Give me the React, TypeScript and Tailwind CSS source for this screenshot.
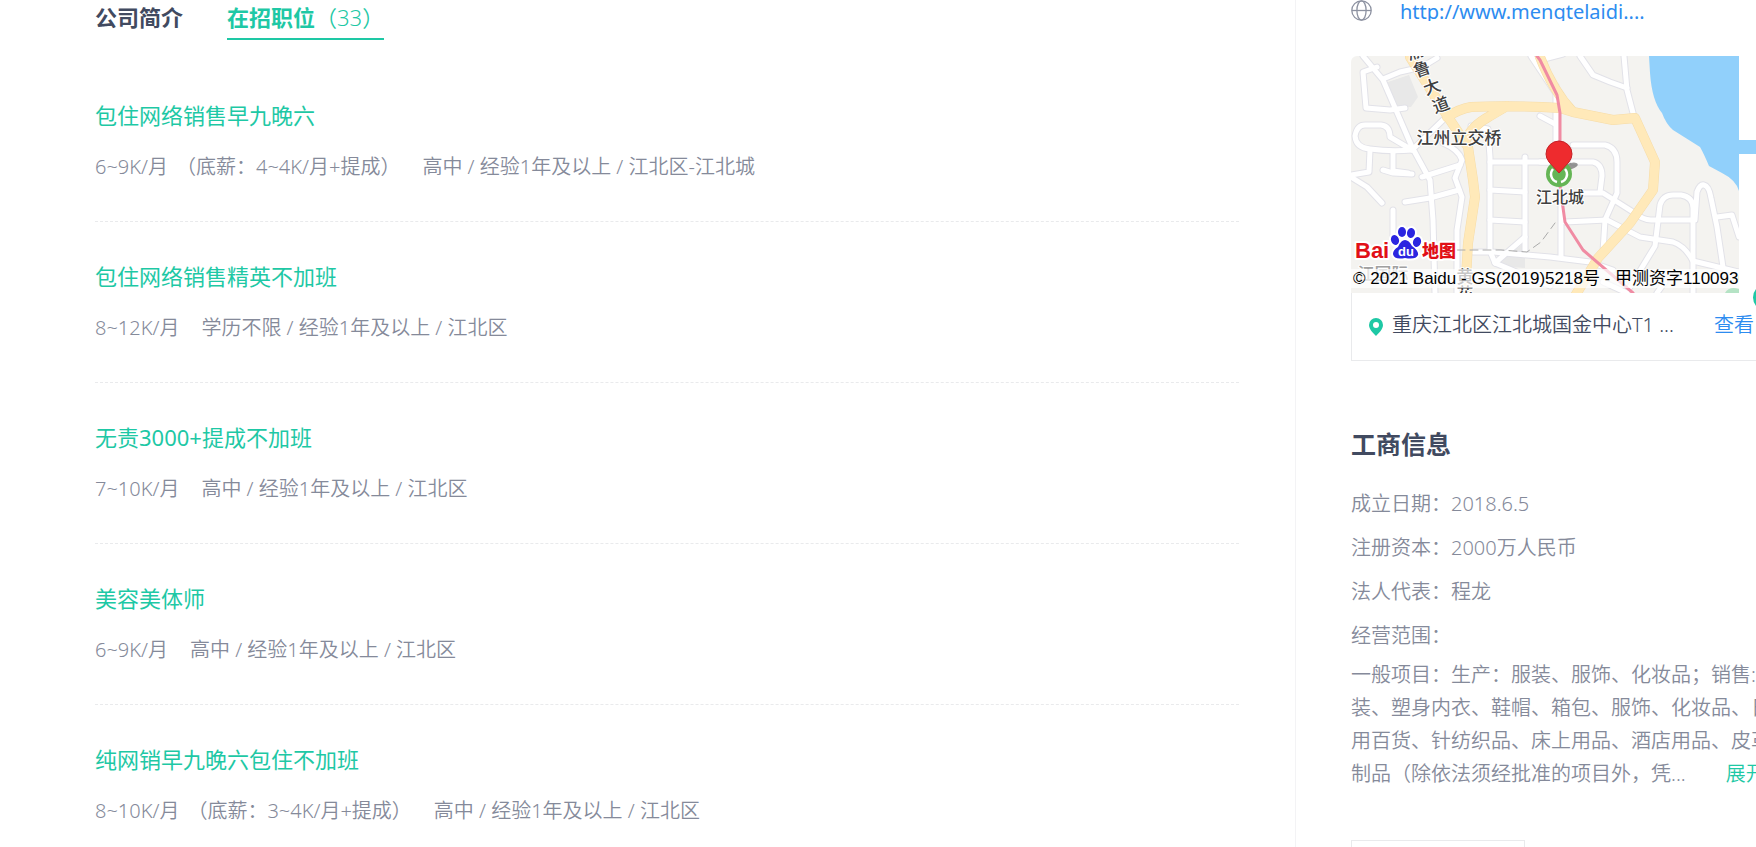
import React from "react";

type Job = { title: string; pay: string; base?: string; detail: string };

const jobs: Job[] = [
  { title: "包住网络销售早九晚六", pay: "6~9K/月", base: "（底薪：4~4K/月+提成）", detail: "高中 / 经验1年及以上 / 江北区-江北城" },
  { title: "包住网络销售精英不加班", pay: "8~12K/月", detail: "学历不限 / 经验1年及以上 / 江北区" },
  { title: "无责3000+提成不加班", pay: "7~10K/月", detail: "高中 / 经验1年及以上 / 江北区" },
  { title: "美容美体师", pay: "6~9K/月", detail: "高中 / 经验1年及以上 / 江北区" },
  { title: "纯网销早九晚六包住不加班", pay: "8~10K/月", base: "（底薪：3~4K/月+提成）", detail: "高中 / 经验1年及以上 / 江北区" },
];

const facts = [
  ["成立日期：", "2018.6.5"],
  ["注册资本：", "2000万人民币"],
  ["法人代表：", "程龙"],
  ["经营范围：", ""],
];

const streets = [
  "M12 0L32 24L61 91L79 124L82 164L84 237",
  "M86 2Q72 12 49 16L32 23",
  "M26 11L12 16L15 52L39 54L54 52",
  "M4 80Q6 69 14 69H30Q39 70 39 81L61 94Q40 96 19 93Q5 92 4 80Z",
  "M19 94L18 116L0 119",
  "M42 96L42 115L57 117",
  "M0 121L16 131L31 147",
  "M32 114L42 117L61 118",
  "M54 146L79 142L108 134",
  "M42 154V181",
  "M61 94L92 64",
  "M92 87Q108 94 111 104L104 122L111 141L106 174V237",
  "M71 121L109 109",
  "M120 70L137 73L139 101V195L144 207L199 230",
  "M139 106H199",
  "M139 134L174 136",
  "M139 164L174 166",
  "M174 101V194",
  "M122 196H142L199 201L239 206L262 214",
  "M144 207L174 181",
  "M229 0L242 19L259 26L276 32",
  "M273 0L276 34L282 57",
  "M205 30V86",
  "M189 60L204 68",
  "M180 0L204 36",
  "M189 4L212 -2",
  "M222 89H254Q266 92 266 106V137L254 164L252 196",
  "M222 106H242Q251 108 251 120L249 136",
  "M189 106H204",
  "M232 137H252L282 156Q292 164 300 164H342",
  "M214 166L256 164L289 181L322 186Q334 190 342 205L388 216",
  "M279 231L304 190L309 149Q312 139 322 139H330Q342 141 342 152V237",
  "M344 164L346 136Q349 128 353 129Q358 130 360 142L366 171L372 211",
  "M366 161L381 159L388 181",
  "M210 150V201",
  "M306 237L314 226",
  "M252 226L276 237",
];

const YELLOW =
  "M59 1L97 61L117 91L122 124L124 141L117 187L114 240M96 61Q108 53 120 51Q160 49 209 52L222 56L262 64L284 62L304 106L302 134L279 167L247 202L224 240M114 86Q120 70 139 60L156 50M189 1Q202 35 222 56";

function Paw() {
  return (
    <g fill="#2b25e0">
      <ellipse cx="44" cy="184" rx="4" ry="5" transform="rotate(-20 44 184)" />
      <ellipse cx="51" cy="176" rx="4" ry="5" />
      <ellipse cx="60" cy="177" rx="4" ry="5" transform="rotate(10 60 177)" />
      <ellipse cx="66" cy="186" rx="4" ry="5" transform="rotate(20 66 186)" />
      <path d="M54 184Q58 184 61 190Q68 195 67 199Q65 204 54 202Q43 204 42 198Q42 194 47 191Q50 184 54 184Z" />
    </g>
  );
}

function MapDrawing() {
  return (
    <svg viewBox="0 0 388 237" className="block h-full w-full" aria-label="地图">
      <rect width="388" height="237" fill="#f4f3f0" />
      <path d="M34 27L58 19L67 41L60 51H44Z" fill="#e8e8e8" />
      <path d="M144 210L174 186V212Z" fill="#e8e8e8" />
      <path d="M374 237Q378 230 388 233V237Z" fill="#b5e3c5" />
      <path d="M298 0L299 17Q301 45 311 57Q315 68 322 74L349 91Q353 98 358 110L371 117Q385 124 388 135V0Z" fill="#91d0fb" />
      <g fill="none" strokeLinejoin="round" strokeLinecap="round">
        {streets.map((d) => <path key={d} d={d} stroke="#e2e2e8" strokeWidth="7" />)}
        {streets.map((d) => <path key={d} d={d} stroke="#ffffff" strokeWidth="5" />)}
        <path d={YELLOW} stroke="#f6dca8" strokeWidth="10" />
        <path d={YELLOW} stroke="#ffe9b9" strokeWidth="9" />
        <path d="M106 194L150 194L176 196L190 186L204 167" stroke="#aaaaaa" strokeWidth="1" strokeDasharray="8 5" />
        <path d="M186 0L189 4L206 39L209 57V130L214 166L232 194L282 237" stroke="#f08ba3" strokeWidth="3" />
      </g>
      <ellipse cx="220" cy="110" rx="7" ry="3" fill="#555555" opacity="0.6" transform="rotate(-15 220 110)" />
      <circle cx="208" cy="118" r="13" fill="#65b555" />
      <path d="M202 113A8 8 0 0 0 206 126M214 113A8 8 0 0 1 210 126" fill="none" stroke="#ffffff" strokeWidth="2.5" />
      <path d="M208 117L198 106Q195 102 195 98A13 13 0 0 1 221 98Q221 102 218 106Z" fill="#ee2b2e" stroke="#c42026" strokeWidth="1" />
      <g
        fill="#404040"
        stroke="#ffffff"
        strokeWidth="2"
        paintOrder="stroke"
        textAnchor="middle"
        fontSize="17"
        fontWeight="500"
        className="font-['Noto_Sans_CJK_SC',sans-serif]"
      >
        <text x="108" y="88">江州立交桥</text>
        <text x="209" y="147" fontSize="16">江北城</text>
        <text transform="translate(64 -4) rotate(-20)" y="6">渝</text>
        <text transform="translate(71 13) rotate(-20)" y="6">鲁</text>
        <text transform="translate(81 31) rotate(-20)" y="6">大</text>
        <text transform="translate(90 49) rotate(-20)" y="6">道</text>
        <text x="32" y="224" fill="#a0a0a0">江国际</text>
        <text x="114" y="227">黄</text>
        <text x="114" y="244">花</text>
      </g>
      <g stroke="#ffffff" strokeWidth="4" paintOrder="stroke" strokeLinejoin="round" fontWeight="900">
        <text x="4" y="202" fontSize="22" fill="#e10f17" className="font-['Liberation_Sans',sans-serif]">Bai</text>
        <text x="71" y="201" fontSize="17" fill="#e10f17" className="font-['Noto_Sans_CJK_SC',sans-serif]">地图</text>
      </g>
      <g stroke="#ffffff" strokeWidth="4" strokeLinejoin="round"><Paw /></g>
      <Paw />
      <text x="47" y="200" fontSize="13" fontWeight="700" fill="#ffffff" className="font-['Liberation_Sans',sans-serif]">du</text>
    </svg>
  );
}

function Globe() {
  return (
    <svg viewBox="0 0 21 21" className="size-[21px] shrink-0" fill="none" stroke="#8d92a1" strokeWidth="1.3">
      <circle cx="10.5" cy="10.5" r="9.7" />
      <ellipse cx="10.5" cy="10.5" rx="4.6" ry="9.7" />
      <path d="M1 10.5H20" />
    </svg>
  );
}

export default function App() {
  return (
    <div className="flex overflow-hidden bg-white font-['Noto_Sans','Noto_Sans_CJK_SC',sans-serif] text-[#858a9a]">
      <main className="min-w-0 flex-1 pr-14 pl-[95px]">
        <nav className="flex gap-11 text-[22px] leading-8">
          <a href="#intro" className="pt-px font-bold text-[#414a60]">公司简介</a>
          <a href="#jobs" className="border-b-2 border-[#1ec8a5] pt-px pb-[5px] text-[#1ec8a5]" aria-current="page">
            <b>在招职位</b>
            <span className="font-[350]">（33）</span>
          </a>
        </nav>
        <ul className="pt-[21px]">
          {jobs.map((job) => (
            <li key={job.title} className="h-[161px] border-b border-dashed border-[#e9eaec] pt-[38px]">
              <h3 className="text-[22px] leading-8">
                <a href="#job" className="text-[#1ec8a5]">{job.title}</a>
              </h3>
              <p className="mt-[18px] flex text-[20px] leading-9 font-[350] whitespace-nowrap">
                <span>{job.pay}</span>
                {job.base && <span className="ml-2">{job.base}</span>}
                <span className="ml-[22px]">{job.detail}</span>
              </p>
            </li>
          ))}
        </ul>
      </main>

      <aside className="h-[847px] w-[461px] shrink-0 overflow-hidden border-l border-[#f3f3f5] pl-[55px]">
        <div className="w-[430px]">
          <div className="flex h-[21px] overflow-hidden text-[20px]">
            <Globe />
            <a href="http://www.mengtelaidi.com" className="ml-7 leading-[23px] text-[#2d8cf0]">http://www.mengtelaidi....</a>
          </div>

          <section className="relative mt-[35px]">
            <div className="relative h-[237px] bg-[linear-gradient(#91d0fb,#91d0fb)] bg-[length:100%_14px] bg-[position:0_84px] bg-no-repeat">
              <div className="relative h-full w-[388px] overflow-hidden rounded-tl-md">
                <MapDrawing />
                <p className="absolute inset-x-0 bottom-[5px] h-[19px] overflow-hidden bg-white/70 pl-0.5 font-['Liberation_Sans','Noto_Sans_CJK_SC',sans-serif] text-[17px] leading-[19px] whitespace-nowrap text-black">
                  © 2021 Baidu - GS(2019)5218号 - 甲测资字1100930
                </p>
              </div>
            </div>
            <span className="absolute top-[228px] left-[402px] size-[27px] rounded-full bg-[#1ec8a5]" />
            <div className="flex h-[68px] items-center border border-t-0 border-[#e9eaec] pb-1 pl-[17px] text-[20px] font-[350]">
              <svg viewBox="0 0 14 18" className="mt-1 h-[18px] w-[14px]">
                <path fillRule="evenodd" fill="#1ec8a5" d="M7 0A7 7 0 0 1 14 7C14 11 10 15 7 18C4 15 0 11 0 7A7 7 0 0 1 7 0ZM7 4A3 3 0 1 0 7 10A3 3 0 1 0 7 4Z" />
              </svg>
              <span className="ml-[9px] w-[322px] whitespace-nowrap text-[#414a60]">重庆江北区江北城国金中心T1 ...</span>
              <a href="#map" className="whitespace-nowrap text-[#2d8cf0]">查看</a>
            </div>
          </section>

          <section className="pt-[65px] font-[350]">
            <h2 className="text-[25px] leading-9 font-bold text-[#414a60]">工商信息</h2>
            <dl className="mt-5 text-[20px] leading-[44px]">
              {facts.map(([k, v]) => (
                <div key={k} className="flex">
                  <dt>{k}</dt>
                  <dd>{v}</dd>
                </div>
              ))}
            </dl>
            <p className="text-[20px] leading-[33px]">
              一般项目：生产：服装、服饰、化妆品；销售:服装、塑身内衣、鞋帽、箱包、服饰、化妆品、日用百货、针纺织品、床上用品、酒店用品、皮革制品（除依法须经批准的项目外，凭...
              <button type="button" className="ml-10 text-[#1ec8a5]">展开</button>
            </p>
          </section>
          <div className="mt-[50px] h-20 w-[174px] border border-[#e9eaec]" />
        </div>
      </aside>
    </div>
  );
}
